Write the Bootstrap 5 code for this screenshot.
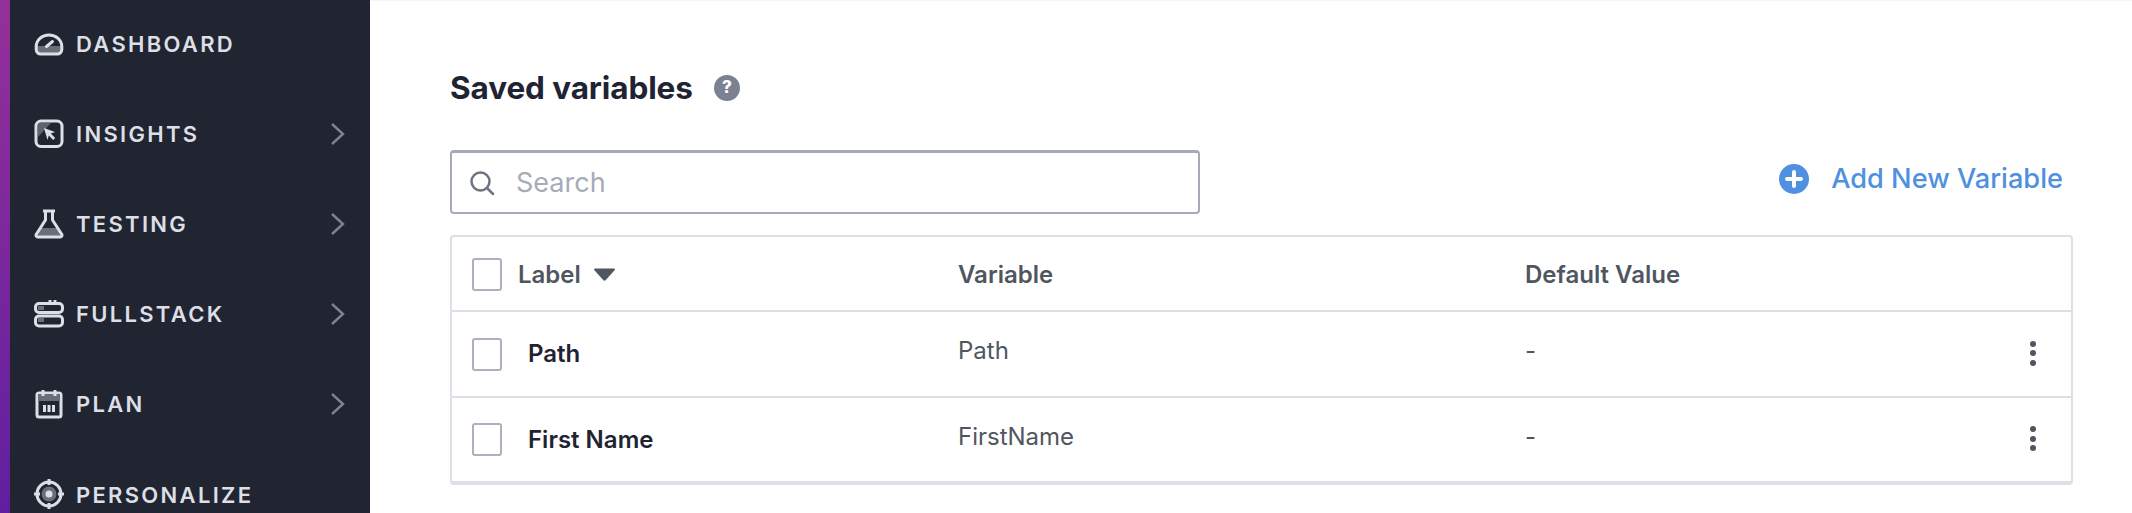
<!DOCTYPE html>
<html lang="en">
<head>
    <meta charset="UTF-8">
    <title>Saved variables</title>
    <link href="https://cdn.jsdelivr.net/npm/bootstrap@5.3.0/dist/css/bootstrap.min.css" rel="stylesheet">
    <style>
        html, body { height: 513px; overflow: hidden; }
        body { font-family: Inter, "Liberation Sans", sans-serif; color: #1f2432; background: #fff; }
        .app-shell { height: 513px; }
        .brand-strip { width: 10px; background: linear-gradient(180deg, #94309a 0%, #601f9f 100%); }
        .side-nav { width: 360px; background: #212531; margin-top: -1px; }
        .side-link { height: 90px; flex: none; padding: 0 25px 0 24px; color: #dcdfe6; font-size: 22px; font-weight: 600; letter-spacing: 2.3px; text-decoration: none; }
        .side-link:last-child { height: 64px; padding-top: 30px; align-items: flex-start !important; }
        .side-icon { width: 30px; height: 30px; margin-right: 12px; flex: none; }
        .side-chevron { width: 15px; height: 24px; flex: none; }
        .main-area { padding: 0 59px 0 80px; border-top: 1px solid #f5f6f8; }
        .title-row { padding-top: 69px; }
        .page-title { font-size: 31.5px; font-weight: 700; line-height: 36px; margin: 0; letter-spacing: -0.1px; }
        .help-dot { width: 26px; height: 26px; margin-left: 21px; border-radius: 50%; background: #7b8190; color: #fff; font-size: 17px; font-weight: 800; }
        .toolbar-row { margin-top: 44px; }
        .search-box { width: 750px; height: 64px; border: 2px solid #a5abb8; border-top-width: 3px; border-radius: 4px; padding: 0 17px; }
        .search-box input { border: 0; outline: 0; flex: 1; font-size: 27px; color: #1f2432; margin: 2px 0 0 21px; font-family: inherit; padding: 0; }
        .search-box input::placeholder { color: #a5abb8; opacity: 1; }
        .add-link { color: #4f90e0; font-size: 27.2px; font-weight: 500; text-decoration: none; margin: 0 10px 5px 0; }
        .add-link svg { margin-right: 22px; }
        .vars-card { margin-top: 21px; border: 2px solid #dcdfe5; border-bottom-width: 4px; border-radius: 4px; }
        .vars-table { margin: 0; }
        .vars-table th, .vars-table td { border-bottom: 2px solid #dcdfe5; padding: 0; vertical-align: middle; box-shadow: none; }
        .vars-table tr:last-child td { border-bottom: 0; }
        .vars-table th { height: 74px; padding-top: 2px; font-size: 24px; font-weight: 600; color: #50565f; }
        .vars-table td { height: 86px; font-size: 24px; color: #50565f; }
        .vars-table tr:last-child td { height: 84px; }
        .col-name { width: 506px; }
        .col-var { width: 567px; }
        .col-more { width: 76px; }
        .box-cell { padding-left: 20px !important; }
        .tick-box { width: 30px; height: 33px; border: 2px solid #abb1bd; border-radius: 3px; background: #fff; flex: none; }
        .name-text { font-weight: 600; color: #1f2432; margin-left: 26px; position: relative; }
        .head-text { margin-left: 16px; }
        .sort-arrow { width: 23px; height: 13px; margin-left: 12px; }
        .value-text { position: relative; top: -3px; }
        .more-dots { gap: 3.5px; position: relative; top: -1px; }
        .more-dots span { width: 6px; height: 6px; border-radius: 50%; background: #50565f; }
    </style>
</head>
<body>
<div class="app-shell d-flex">
    <div class="brand-strip"></div>
    <nav class="side-nav d-flex flex-column flex-shrink-0">
        <a class="side-link d-flex align-items-center" href="#">
            <svg class="side-icon" viewBox="0 0 30 30" fill="none">
                <path d="M3 17h24v5a3 3 0 0 1-3 3H6a3 3 0 0 1-3-3z" fill="#6a6e79"/>
                <path d="M7 25a4.500 4.500 0 0 1-4.800-4.500v-3a12.800 11.500 0 0 1 25.600 0v3A4.500 4.500 0 0 1 23 25z" stroke="#dcdfe6" stroke-width="3"/>
                <path d="M12.500 17.500l6-5" stroke="#dcdfe6" stroke-width="3" stroke-linecap="round"/>
            </svg>
            <span>DASHBOARD</span>
        </a>
        <a class="side-link d-flex align-items-center justify-content-between" href="#">
            <span class="d-flex align-items-center">
                <svg class="side-icon" viewBox="0 0 30 30" fill="none">
                    <path d="M5 4h12L4 18V5z" fill="#5f636e"/>
                    <rect x="2" y="2" width="26" height="25.500" rx="5" stroke="#dcdfe6" stroke-width="3"/>
                    <path d="M10 9l11 4-4.200 1.600 4.400 4.400-2 2-4.400-4.400L13.500 21z" fill="#dcdfe6"/>
                </svg>
                <span>INSIGHTS</span>
            </span>
            <svg class="side-chevron" viewBox="0 0 15 24" fill="none"><path d="M2 2l11 10L2 22" stroke="#7f838d" stroke-width="2.400"/></svg>
        </a>
        <a class="side-link d-flex align-items-center justify-content-between" href="#">
            <span class="d-flex align-items-center">
                <svg class="side-icon" viewBox="0 0 30 30" fill="none">
                    <path d="M6.500 19h17l3 8H3.500z" fill="#6a6e79"/>
                    <path d="M9 2h12M11.500 2v9L2.500 25a1.800 1.800 0 0 0 1.500 3h22a1.800 1.800 0 0 0 1.500-3l-9-14V2" stroke="#dcdfe6" stroke-width="3" stroke-linejoin="round"/>
                </svg>
                <span>TESTING</span>
            </span>
            <svg class="side-chevron" viewBox="0 0 15 24" fill="none"><path d="M2 2l11 10L2 22" stroke="#7f838d" stroke-width="2.400"/></svg>
        </a>
        <a class="side-link d-flex align-items-center justify-content-between" href="#">
            <span class="d-flex align-items-center">
                <svg class="side-icon" viewBox="0 0 30 30" fill="none">
                    <path d="M4 7h6v4H4zM4 19h6v4H4z" fill="#6a6e79"/>
                    <rect x="1.500" y="4.500" width="27" height="9" rx="3.500" stroke="#dcdfe6" stroke-width="3"/>
                    <rect x="1.500" y="17" width="27" height="10" rx="3.500" stroke="#dcdfe6" stroke-width="3"/>
                    <path d="M16 1v3M21 1v3" stroke="#dcdfe6" stroke-width="3"/>
                </svg>
                <span>FULLSTACK</span>
            </span>
            <svg class="side-chevron" viewBox="0 0 15 24" fill="none"><path d="M2 2l11 10L2 22" stroke="#7f838d" stroke-width="2.400"/></svg>
        </a>
        <a class="side-link d-flex align-items-center justify-content-between" href="#">
            <span class="d-flex align-items-center">
                <svg class="side-icon" viewBox="0 0 30 30" fill="none">
                    <rect x="3" y="4" width="24" height="24" rx="2" stroke="#dcdfe6" stroke-width="3"/>
                    <rect x="4" y="5" width="22" height="7" fill="#6a6e79"/>
                    <path d="M9 1v6M21 1v6" stroke="#dcdfe6" stroke-width="3"/>
                    <path d="M9 16h3v7H9zM13.500 16h3v7h-3zM18 16h3v7h-3z" fill="#dcdfe6"/>
                </svg>
                <span>PLAN</span>
            </span>
            <svg class="side-chevron" viewBox="0 0 15 24" fill="none"><path d="M2 2l11 10L2 22" stroke="#7f838d" stroke-width="2.400"/></svg>
        </a>
        <a class="side-link d-flex align-items-center" href="#">
            <svg class="side-icon" viewBox="0 0 30 30" fill="none">
                <circle cx="15" cy="15" r="7.500" fill="#6a6e79"/>
                <circle cx="15" cy="15" r="12" stroke="#dcdfe6" stroke-width="3"/>
                <circle cx="15" cy="15" r="3.500" fill="#dcdfe6"/>
                <path d="M15 0v6M15 24v6M0 15h6M24 15h6" stroke="#dcdfe6" stroke-width="3"/>
            </svg>
            <span>PERSONALIZE</span>
        </a>
    </nav>
    <main class="main-area flex-grow-1">
        <div class="title-row d-flex align-items-center">
            <h1 class="page-title">Saved variables</h1>
            <span class="help-dot d-flex align-items-center justify-content-center">?</span>
        </div>
        <div class="toolbar-row d-flex justify-content-between align-items-center">
            <div class="search-box d-flex align-items-center">
                <svg width="26" height="26" viewBox="0 0 26 26" fill="none" stroke="#6d7482" stroke-width="2.500">
                    <circle cx="11.500" cy="11.500" r="9"/>
                    <path d="M18 18l6 6" stroke-linecap="round"/>
                </svg>
                <input type="text" placeholder="Search">
            </div>
            <a class="add-link d-flex align-items-center" href="#">
                <svg width="30" height="30" viewBox="0 0 30 30">
                    <circle cx="15" cy="15" r="15" fill="#4f90e0"/>
                    <path d="M15 8v14M8 15h14" stroke="#fff" stroke-width="4" stroke-linecap="round"/>
                </svg>
                Add New Variable
            </a>
        </div>
        <div class="vars-card">
            <table class="vars-table table table-borderless">
                <thead>
                <tr>
                    <th class="col-name box-cell">
                        <div class="d-flex align-items-center">
                            <span class="tick-box"></span>
                            <span class="head-text">Label</span>
                            <svg class="sort-arrow" viewBox="0 0 23 13"><path d="M1 1.500a1 1 0 0 1 1-1h19a1 1 0 0 1 .8 1.600l-9 10a1.500 1.500 0 0 1-2.600 0l-9-10z" fill="#50565f"/></svg>
                        </div>
                    </th>
                    <th class="col-var">Variable</th>
                    <th>Default Value</th>
                    <th class="col-more"></th>
                </tr>
                </thead>
                <tbody>
                <tr>
                    <td class="box-cell"><div class="d-flex align-items-center"><span class="tick-box"></span><span class="name-text">Path</span></div></td>
                    <td><span class="value-text">Path</span></td>
                    <td><span class="value-text">-</span></td>
                    <td><div class="more-dots d-flex flex-column align-items-center"><span></span><span></span><span></span></div></td>
                </tr>
                <tr>
                    <td class="box-cell"><div class="d-flex align-items-center"><span class="tick-box"></span><span class="name-text">First Name</span></div></td>
                    <td><span class="value-text">FirstName</span></td>
                    <td><span class="value-text">-</span></td>
                    <td><div class="more-dots d-flex flex-column align-items-center"><span></span><span></span><span></span></div></td>
                </tr>
                </tbody>
            </table>
        </div>
    </main>
</div>
<script src="https://cdn.jsdelivr.net/npm/bootstrap@5.3.0/dist/js/bootstrap.bundle.min.js"></script>
</body>
</html>
